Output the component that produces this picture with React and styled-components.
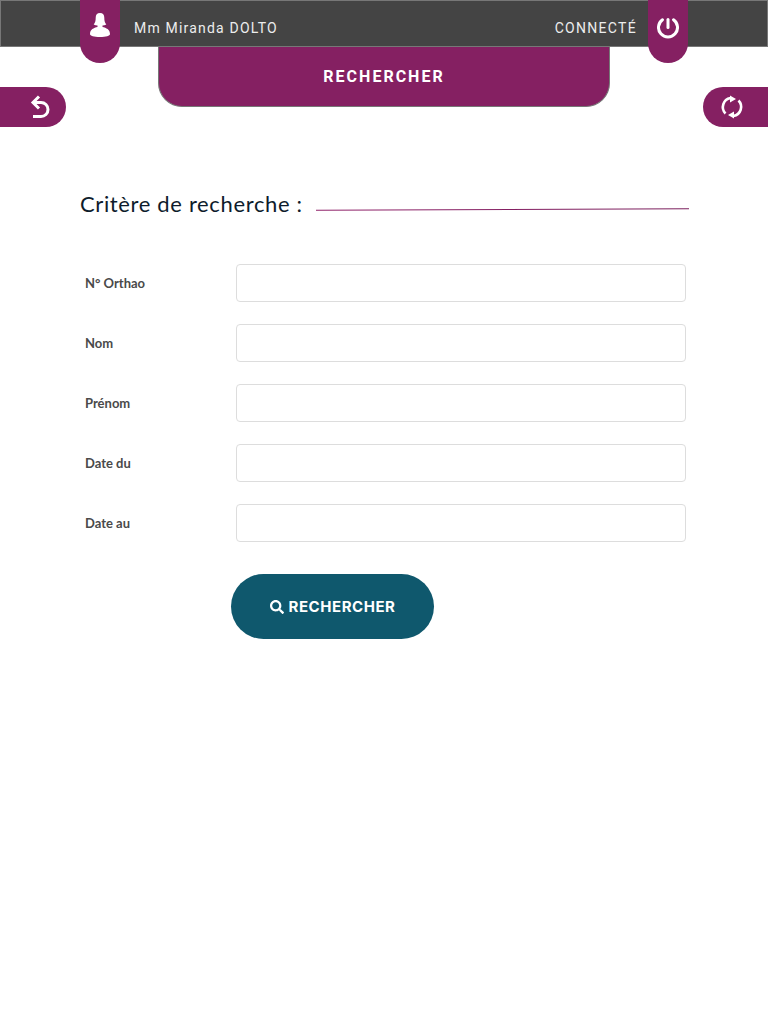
import styled, { createGlobalStyle } from "styled-components";
import { FaSearch } from "react-icons/fa";

const GlobalStyle = createGlobalStyle`
  html, body {
    margin: 0;
    padding: 0;
    background: #fff;
    font-family: "Lato", sans-serif;
  }
  * {
    box-sizing: border-box;
  }
`;

const Page = styled.div`
  width: 768px;
  height: 1024px;
  overflow: hidden;
  background: #fff;
`;

const Header = styled.header`
  height: 47px;
  background: #444444;
  border: 1px solid #777777;
  display: flex;
  align-items: flex-start;
  padding: 0 79px;
`;

const HeaderPill = styled.div`
  width: 40px;
  height: 63px;
  margin-top: -1px;
  flex: none;
  background: #852062;
  border-radius: 0 0 20px 20px;
  display: flex;
  justify-content: center;
  padding-top: 13px;
  position: relative;
  z-index: 2;
`;

const UserName = styled.span`
  margin-left: 14px;
  line-height: 55px;
  font-family: "Roboto", sans-serif;
  font-size: 14px;
  letter-spacing: 1.2px;
  color: #ededed;
`;

const Status = styled.span`
  margin-left: auto;
  margin-right: 11px;
  line-height: 55px;
  font-family: "Roboto", sans-serif;
  font-size: 14px;
  letter-spacing: 1.3px;
  color: #ededed;
`;

const SubBar = styled.div`
  display: flex;
  justify-content: space-between;
  align-items: flex-start;
  height: 80px;
`;

const SideButton = styled.button`
  width: ${(p) => p.$width}px;
  height: 40px;
  margin-top: 40px;
  border: 0;
  padding: 0 ${(p) => (p.$side === "left" ? "16px" : "0")} 0 ${(p) => (p.$side === "left" ? "0" : "17px")};
  background: #852062;
  border-radius: ${(p) => (p.$side === "left" ? "0 20px 20px 0" : "20px 0 0 20px")};
  display: flex;
  align-items: center;
  justify-content: ${(p) => (p.$side === "left" ? "flex-end" : "flex-start")};
`;

const Tab = styled.div`
  width: 452px;
  height: 60px;
  margin-right: 1px;
  background: #852062;
  border: 1px solid #777777;
  border-top: 0;
  border-radius: 0 0 24px 24px;
  display: flex;
  align-items: center;
  justify-content: center;
  color: #fff;
  font-family: "Roboto", sans-serif;
  font-weight: 700;
  font-size: 16px;
  letter-spacing: 2px;
  padding-bottom: 1px;
`;

const Content = styled.main`
  padding: 62px 79px 0 80px;
`;

const TitleRow = styled.div`
  display: flex;
  align-items: center;
  gap: 13px;
  height: 28px;
`;

const Title = styled.h2`
  margin: 0;
  font-family: "Lato", sans-serif;
  font-weight: 400;
  font-size: 22px;
  letter-spacing: 0.65px;
  color: #0e1c2c;
  white-space: nowrap;
`;

const TitleLine = styled.div`
  flex: 1;
  height: 1px;
  margin-top: 12px;
  background: linear-gradient(to right, #8f2069, #7a1f5c);
  transform: rotate(-0.2deg);
`;

const Form = styled.form`
  display: flex;
  flex-direction: column;
  gap: 22px;
  margin-top: 47px;
`;

const Row = styled.div`
  display: flex;
  align-items: center;
  padding-left: 5px;
`;

const Label = styled.label`
  width: 151px;
  flex: none;
  font-family: "Lato", sans-serif;
  font-weight: 700;
  font-size: 13px;
  color: #4a4a4a;
`;

const Input = styled.input`
  width: 450px;
  height: 38px;
  background: #fff;
  border: 1px solid #dddddd;
  border-radius: 4px;
  padding: 0 12px;
`;

const SubmitButton = styled.button`
  align-self: flex-start;
  width: 203px;
  height: 65px;
  margin: 10px 0 0 151px;
  border: 0;
  border-radius: 33px;
  background: #0f586d;
  color: #fff;
  font-family: "Inter", sans-serif;
  font-weight: 700;
  font-size: 15px;
  letter-spacing: 0.55px;
  display: flex;
  align-items: center;
  justify-content: center;
  gap: 5px;
`;

const fields = ["N° Orthao", "Nom", "Prénom", "Date du", "Date au"];

const UserIcon = () => (
  <svg width="20" height="24" viewBox="0 0 20 24" fill="#fff">
    <path d="M10 0c3 0 4.300 2 4.300 4.700 0 2.800.4 5 2 6.800-1.200.7-2.600 1-3.800 1.100v1.400c3.700.9 7.500 2.400 7.500 7 0 2-4 3-10 3s-10-1-10-3c0-4.600 3.800-6.100 7.500-7v-1.400c-1.200-.1-2.600-.4-3.800-1.100 1.600-1.800 2-4 2-6.800C5.700 2 7 0 10 0z" />
  </svg>
);

const PowerIcon = () => (
  <svg width="22" height="26" viewBox="0 0 22 26" fill="none" stroke="#fff" strokeWidth="3" strokeLinecap="round">
    <path d="M11 6.500v8" />
    <path d="M5.500 6.750a9.500 9.500 0 1 0 11 0" />
  </svg>
);

const BackIcon = () => (
  <svg width="20" height="24" viewBox="0 0 20 24" fill="none" stroke="#fff" strokeWidth="3">
    <path d="M3 21.500h8a7 7 0 0 0 0-14H3" />
    <path d="M9 1.500 3 7.500l6 6" />
  </svg>
);

const RefreshIcon = () => (
  <svg width="24" height="24" viewBox="0 0 24 24" fill="none" stroke="#fff" strokeWidth="2.600">
    <path d="M5.500 18.500A9.200 9.200 0 0 1 10.500 3" />
    <path d="M18.500 5.500A9.200 9.200 0 0 1 13.500 21" />
    <path d="M10 .5v7l6-3.500z" fill="#fff" stroke="none" />
    <path d="M14 23.500v-7l-6 3.500z" fill="#fff" stroke="none" />
  </svg>
);

export default function App() {
  return (
    <Page>
      <GlobalStyle />
      <Header>
        <HeaderPill>
          <UserIcon />
        </HeaderPill>
        <UserName>Mm Miranda DOLTO</UserName>
        <Status>CONNECTÉ</Status>
        <HeaderPill>
          <PowerIcon />
        </HeaderPill>
      </Header>
      <SubBar>
        <SideButton $side="left" $width={66} type="button">
          <BackIcon />
        </SideButton>
        <Tab>RECHERCHER</Tab>
        <SideButton $side="right" $width={65} type="button">
          <RefreshIcon />
        </SideButton>
      </SubBar>
      <Content>
        <TitleRow>
          <Title>Critère de recherche :</Title>
          <TitleLine />
        </TitleRow>
        <Form>
          {fields.map((field) => (
            <Row key={field}>
              <Label>{field}</Label>
              <Input type="text" />
            </Row>
          ))}
          <SubmitButton type="button">
            <FaSearch size={14} color="#fff" />
            RECHERCHER
          </SubmitButton>
        </Form>
      </Content>
    </Page>
  );
}
